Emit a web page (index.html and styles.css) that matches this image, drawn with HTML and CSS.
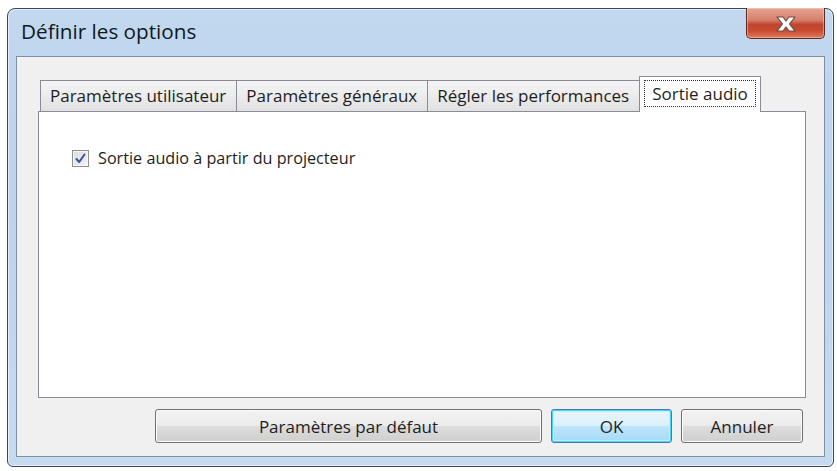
FILE: index.html
```html
<!DOCTYPE html>
<html lang="fr">
<head>
<meta charset="utf-8">
<title>Définir les options</title>
<link rel="stylesheet" href="styles.css">
</head>
<body>
<div class="window">
  <div class="titlebar">
    <div class="title">Définir les options</div>
    <button class="close" aria-label="Fermer">
      <svg width="24" height="18" viewBox="0 0 24 18">
        <path d="M3 2 H9 L12 6 L15 2 H21 L15.5 9 L21 16 H15 L12 12 L9 16 H3 L8.5 9 Z" fill="#ffffff" stroke="#6b4a44" stroke-width="1.2" stroke-linejoin="round"/>
      </svg>
    </button>
  </div>
  <div class="client">
    <div class="tabs">
      <div class="tab">Paramètres utilisateur</div>
      <div class="tab">Paramètres généraux</div>
      <div class="tab">Régler les performances</div>
      <div class="tab active"><span class="focus">Sortie audio</span></div>
    </div>
    <div class="panel">
      <label class="check">
        <span class="box">
          <svg width="11" height="11" viewBox="0 0 11 11">
            <path d="M1.5 6 L4.2 9 L9.5 1.5" fill="none" stroke="#3a4fa6" stroke-width="2" stroke-linecap="round" stroke-linejoin="round"/>
          </svg>
        </span>
        <span class="label">Sortie audio à partir du projecteur</span>
      </label>
    </div>
    <div class="buttons">
      <button class="btn wide">Paramètres par défaut</button>
      <button class="btn default">OK</button>
      <button class="btn">Annuler</button>
    </div>
  </div>
</div>
</body>
</html>
```

FILE: styles.css
```css
html, body {
  margin: 0;
  padding: 0;
  background: #ffffff;
}

body {
  font-family: "Open Sans", "Noto Sans", "Liberation Sans", sans-serif;
  color: #1e1e1e;
}

.window {
  margin: 8px 0 0 7px;
  width: 827px;
  height: 459px;
  box-sizing: border-box;
  border: 1px solid #3d4650;
  border-radius: 8px 8px 6px 6px;
  background: linear-gradient(to bottom, #c2d8ef 0%, #bcd3ec 40%, #c6dbf0 100%);
  box-shadow: inset 0 0 0 1px rgba(255, 255, 255, 0.6);
  display: flex;
  flex-direction: column;
  padding: 0 8px 9px 8px;
}

.titlebar {
  height: 47px;
  display: flex;
  align-items: flex-start;
  justify-content: space-between;
  flex: none;
}

.title {
  font-size: 20.7px;
  color: #101820;
  margin: 8px 0 0 5px;
}

.close {
  width: 79px;
  height: 31px;
  margin: -1px 0 0 0;
  border: 1px solid #5b2a22;
  border-top: none;
  border-radius: 0 0 5px 5px;
  background: linear-gradient(to bottom, #e6a491 0%, #d5806b 40%, #c0452f 55%, #c94a30 75%, #dc7c5c 100%);
  box-shadow: inset 0 0 0 1px rgba(255, 220, 200, 0.45);
  display: flex;
  align-items: center;
  justify-content: center;
  padding: 0;
}

.close svg {
  display: block;
  margin-top: 1px;
}

.client {
  flex: 1;
  background: #f0f0f0;
  border: 1px solid #7f8fa3;
  display: flex;
  flex-direction: column;
  padding: 18px 18px 12px 21px;
}

.tabs {
  display: flex;
  align-items: flex-end;
  padding-left: 2px;
  height: 36px;
  position: relative;
  z-index: 1;
}

.tab {
  height: 31px;
  box-sizing: border-box;
  padding: 0 10px 0 9px;
  font-size: 17px;
  line-height: 29px;
  color: #1e1e1e;
  border: 1px solid #898c95;
  border-bottom: none;
  border-right: none;
  background: linear-gradient(to bottom, #f4f4f4 0%, #ececec 50%, #e1e1e1 100%);
  white-space: nowrap;
}

.tab:nth-child(3) {
  border-right: 1px solid #898c95;
}

.tab.active {
  height: 36px;
  background: #ffffff;
  border: 1px solid #898c95;
  border-bottom: none;
  margin-bottom: -1px;
  padding: 3px 4px 0 4px;
  margin-left: -1px;
  line-height: 26px;
}

.focus {
  display: block;
  border: 1px dotted #333;
  padding: 0 7px;
  height: 27px;
  box-sizing: border-box;
  line-height: 25px;
}

.panel {
  height: 287px;
  background: #ffffff;
  border: 1px solid #898c95;
  box-sizing: border-box;
  padding: 35px 0 0 33px;
}

.check {
  display: flex;
  align-items: center;
  gap: 9px;
}

.box {
  width: 15px;
  height: 15px;
  border: 1px solid #8f8f8f;
  background: linear-gradient(135deg, #dcdcdc 0%, #f4f4f4 100%);
  box-shadow: inset 0 0 0 1px #f6f6f6;
  display: flex;
  align-items: center;
  justify-content: center;
}

.label {
  font-size: 16.2px;
  color: #1e1e1e;
}

.buttons {
  display: flex;
  justify-content: flex-end;
  gap: 9px;
  margin-top: 11px;
  padding-right: 3px;
}

.btn {
  height: 34px;
  width: 122px;
  font-family: "Open Sans", "Noto Sans", "Liberation Sans", sans-serif;
  font-size: 17px;
  color: #1e1e1e;
  border: 1px solid #707070;
  border-radius: 3px;
  background: linear-gradient(to bottom, #f2f2f2 0%, #ebebeb 50%, #dddddd 51%, #cfcfcf 100%);
  box-shadow: inset 0 0 0 1px #fcfcfc;
  padding: 0;
}

.btn.wide {
  width: 387px;
}

.btn.default {
  width: 121px;
  border-color: #3c7fb1;
  background: linear-gradient(to bottom, #eaf6fd 0%, #d9f0fc 50%, #bee6fd 51%, #a7d9f5 100%);
  box-shadow: inset 0 0 0 1px #48d5fd, inset 0 0 0 2px #c8ecfc;
}
```
